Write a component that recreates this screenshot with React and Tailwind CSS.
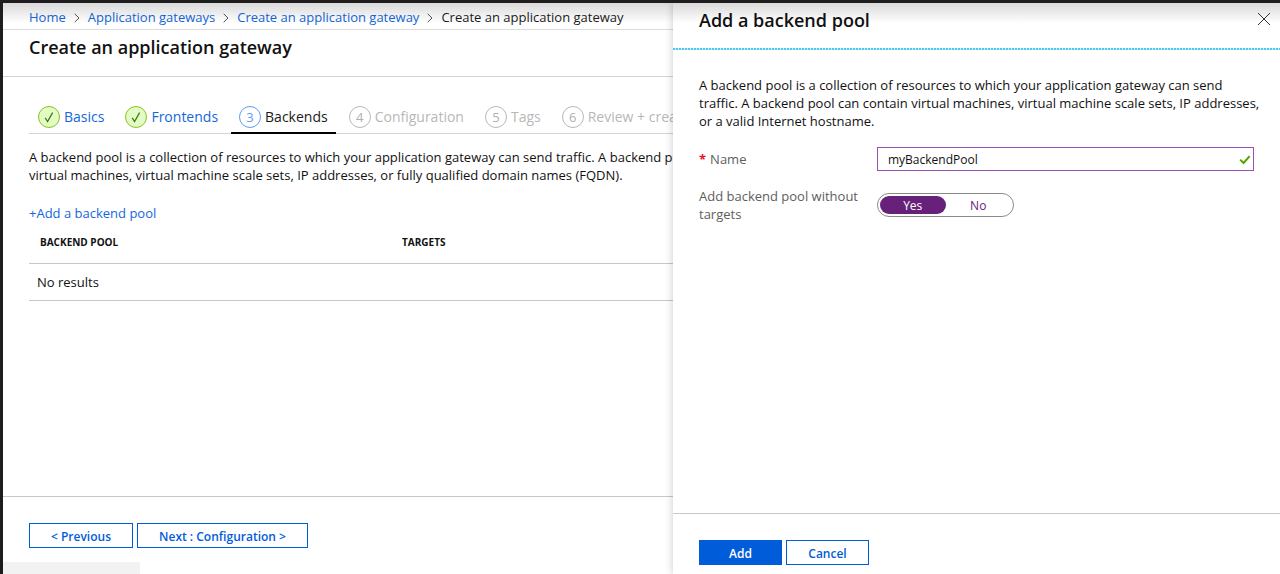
import React, { useState } from "react";

const crumbs = ["Home", "Application gateways", "Create an application gateway"];

const steps = [
  { label: "Basics", state: "done" },
  { label: "Frontends", state: "done" },
  { label: "Backends", state: "active" },
  { label: "Configuration", state: "todo" },
  { label: "Tags", state: "todo" },
  { label: "Review + create", state: "todo" },
];

const circleStyles = {
  done: "border-[#8bc220] bg-[#e3fcc6] text-[#3c7d0c]",
  active: "border-[#5c9cf5] text-[#5c9cf5]",
  todo: "border-[#b8b8b8] text-[#b0b0b0]",
};

const stepStyles = {
  done: "text-[#1467dc]",
  active: "text-[#1b1b1b]",
  todo: "text-[#b8b8b8]",
};

function Chevron() {
  return (
    <svg viewBox="0 0 6 10" className="h-[10px] w-[6px] shrink-0" fill="none" stroke="#555" aria-hidden="true">
      <path d="M0.7 0.8 L5 5 L0.7 9.2" />
    </svg>
  );
}

function StepMark({ state, number }) {
  return (
    <span className={`flex size-[22px] shrink-0 items-center justify-center rounded-full border text-[13px] ${circleStyles[state]}`}>
      {state === "done" ? (
        <svg viewBox="0 0 12 12" className="size-3" fill="none" stroke="currentColor" strokeWidth="1.3" aria-hidden="true">
          <path d="M2.2 6.8 L4.6 10.6 L9.6 1.6" />
        </svg>
      ) : (
        number
      )}
    </span>
  );
}

function Step({ step, number }) {
  const active = step.state === "active";
  return (
    <li className={`-mb-px border-b-2 ${active ? "border-black" : "border-transparent"}`}>
      <button
        type="button"
        aria-current={active ? "step" : undefined}
        disabled={step.state === "todo"}
        className={`flex h-[27px] items-start gap-1 whitespace-nowrap px-2 text-[14px] leading-[22px] ${stepStyles[step.state]}`}
      >
        <StepMark state={step.state} number={number} />
        {step.label}
      </button>
    </li>
  );
}

function Button({ primary, className, children }) {
  return (
    <button
      type="button"
      className={`h-[25px] border border-[#015cda] pt-[2px] text-[12px] leading-4 font-semibold ${primary ? "bg-[#015cda] text-white" : "bg-white text-[#015cda]"} ${className}`}
    >
      {children}
    </button>
  );
}

function Wizard() {
  return (
    <main className="flex min-w-0 flex-1 flex-col overflow-hidden">
      <nav aria-label="Breadcrumb" className="flex h-[27px] items-center border-b border-[#dcdcdc] pt-[3px] pl-[26px] text-[13px]">
        <ol className="flex items-center gap-2 whitespace-nowrap">
          {crumbs.map((crumb) => (
            <li key={crumb} className="flex items-center gap-2">
              <a href="#" className="text-[#1467dc]">{crumb}</a>
              <Chevron />
            </li>
          ))}
          <li aria-current="page" className="text-[#1b1b1b]">Create an application gateway</li>
        </ol>
      </nav>
      <header className="h-[47px] border-b border-[#d4d4d4] pt-[3px] pl-[26px]">
        <h1 className="text-[18px] leading-7 font-semibold">Create an application gateway</h1>
      </header>

      <div className="flex-1 pt-[29px] pl-[26px]">
        <ol className="flex h-[28px] gap-[5px] border-b border-[#d4d4d4] pl-px">
          {steps.map((step, i) => (
            <Step key={step.label} step={step} number={i + 1} />
          ))}
        </ol>
        <p className="mt-[14px] whitespace-nowrap text-[13px] leading-[18px]">
          A backend pool is a collection of resources to which your application gateway can send traffic. A backend pool
          <br />
          virtual machines, virtual machine scale sets, IP addresses, or fully qualified domain names (FQDN).
        </p>
        <a href="#" className="mt-5 block text-[13px] leading-[18px] text-[#1467dc]">+Add a backend pool</a>
        <table className="w-full table-fixed text-left">
          <thead>
            <tr className="h-[41px] border-b border-[#c8c8c8] align-top text-[10px] leading-4">
              <th className="w-[362px] pt-[12px] pl-[11px] font-bold">BACKEND POOL</th>
              <th className="pt-[12px] pl-[11px] font-bold">TARGETS</th>
            </tr>
          </thead>
          <tbody>
            <tr className="h-[37px] border-b border-[#c8c8c8] text-[13px]">
              <td colSpan={2} className="pt-[3px] pl-2">No results</td>
            </tr>
          </tbody>
        </table>
      </div>

      <footer className="flex h-[78px] gap-1 border-t border-[#c8c8c8] pt-[26px] pl-[26px]">
        <Button className="w-[104px] shrink-0">&lt; Previous</Button>
        <Button className="w-[171px] shrink-0">Next : Configuration &gt;</Button>
      </footer>
    </main>
  );
}

function Toggle({ value, onChange }) {
  return (
    <div role="group" aria-labelledby="targets-label" className="flex h-[24px] w-[137px] rounded-full border border-[#8a8a8a] p-[2px] text-[12px]">
      {["Yes", "No"].map((option) => (
        <button
          key={option}
          type="button"
          aria-pressed={value === option}
          onClick={() => onChange(option)}
          className={`flex flex-1 items-center justify-center rounded-full pt-[2px] ${value === option ? "bg-[#68217a] text-white" : "text-[#68217a]"}`}
        >
          {option}
        </button>
      ))}
    </div>
  );
}

function BackendPoolPanel() {
  const [name, setName] = useState("myBackendPool");
  const [withoutTargets, setWithoutTargets] = useState("Yes");
  return (
    <aside aria-labelledby="panel-title" className="z-10 flex w-[607px] shrink-0 flex-col bg-white shadow-[0_0_8px_rgba(0,0,0,0.22)]">
      <header className="flex h-[45px] items-start justify-between pr-[9px] pl-[26px]">
        <h2 id="panel-title" className="pt-[3px] text-[18px] leading-7 font-semibold">Add a backend pool</h2>
        <button type="button" aria-label="Close" className="mt-[9px]">
          <svg viewBox="0 0 14 14" className="size-[14px]" stroke="#333" aria-hidden="true">
            <path d="M1 1 L13 13 M13 1 L1 13" />
          </svg>
        </button>
      </header>
      <div className="h-[2px] bg-[repeating-linear-gradient(90deg,#4fc8ee_0px,#4fc8ee_2px,#c8effa_2px,#c8effa_3px)]" />

      <div className="flex-1 pt-[26px] pr-[26px] pl-[26px] text-[13px] leading-[18px]">
        <p className="whitespace-nowrap">
          A backend pool is a collection of resources to which your application gateway can send
          <br />
          traffic. A backend pool can contain virtual machines, virtual machine scale sets, IP addresses,
          <br />
          or a valid Internet hostname.
        </p>
        <div className="mt-[17px] flex items-center">
          <label htmlFor="pool-name" className="w-[178px] text-[#5e5e5e]">
            <span className="mr-1 font-bold text-[#e81123]">*</span>Name
          </label>
          <div className="relative flex-1">
            <input
              id="pool-name"
              type="text"
              value={name}
              onChange={(e) => setName(e.target.value)}
              className="block h-[24px] w-full border border-[#9b4fb4] pr-6 pl-[10px] text-[12px] outline-none"
            />
            <svg viewBox="0 0 12 10" className="absolute top-2 right-[3px] h-[10px] w-[12px]" fill="none" stroke="#57a300" strokeWidth="2" aria-hidden="true">
              <path d="M1.2 4.6 L4.6 8 L10.6 1.2" />
            </svg>
          </div>
        </div>
        <div className="mt-4 flex items-start">
          <span id="targets-label" className="w-[178px] pr-2 text-[#5e5e5e]">Add backend pool without targets</span>
          <div className="pt-[6px]">
            <Toggle value={withoutTargets} onChange={setWithoutTargets} />
          </div>
        </div>
      </div>

      <footer className="flex h-[61px] gap-1 border-t border-[#c8c8c8] pt-[26px] pl-[26px]">
        <Button primary className="w-[83px]">Add</Button>
        <Button className="w-[83px]">Cancel</Button>
      </footer>
    </aside>
  );
}

export default function App() {
  return (
    <div className="relative flex min-h-screen overflow-hidden border-t-3 border-l-3 border-[#1f1c1e] bg-white font-['Open_Sans','Noto_Sans',sans-serif] text-[#111]">
      <Wizard />
      <BackendPoolPanel />
      <div className="pointer-events-none absolute inset-x-0 top-0 z-20 h-5 bg-linear-to-b from-black/15 to-transparent" />
      <div className="absolute bottom-0 left-0 h-3 w-[137px] bg-[#f2f2f2]" />
    </div>
  );
}
